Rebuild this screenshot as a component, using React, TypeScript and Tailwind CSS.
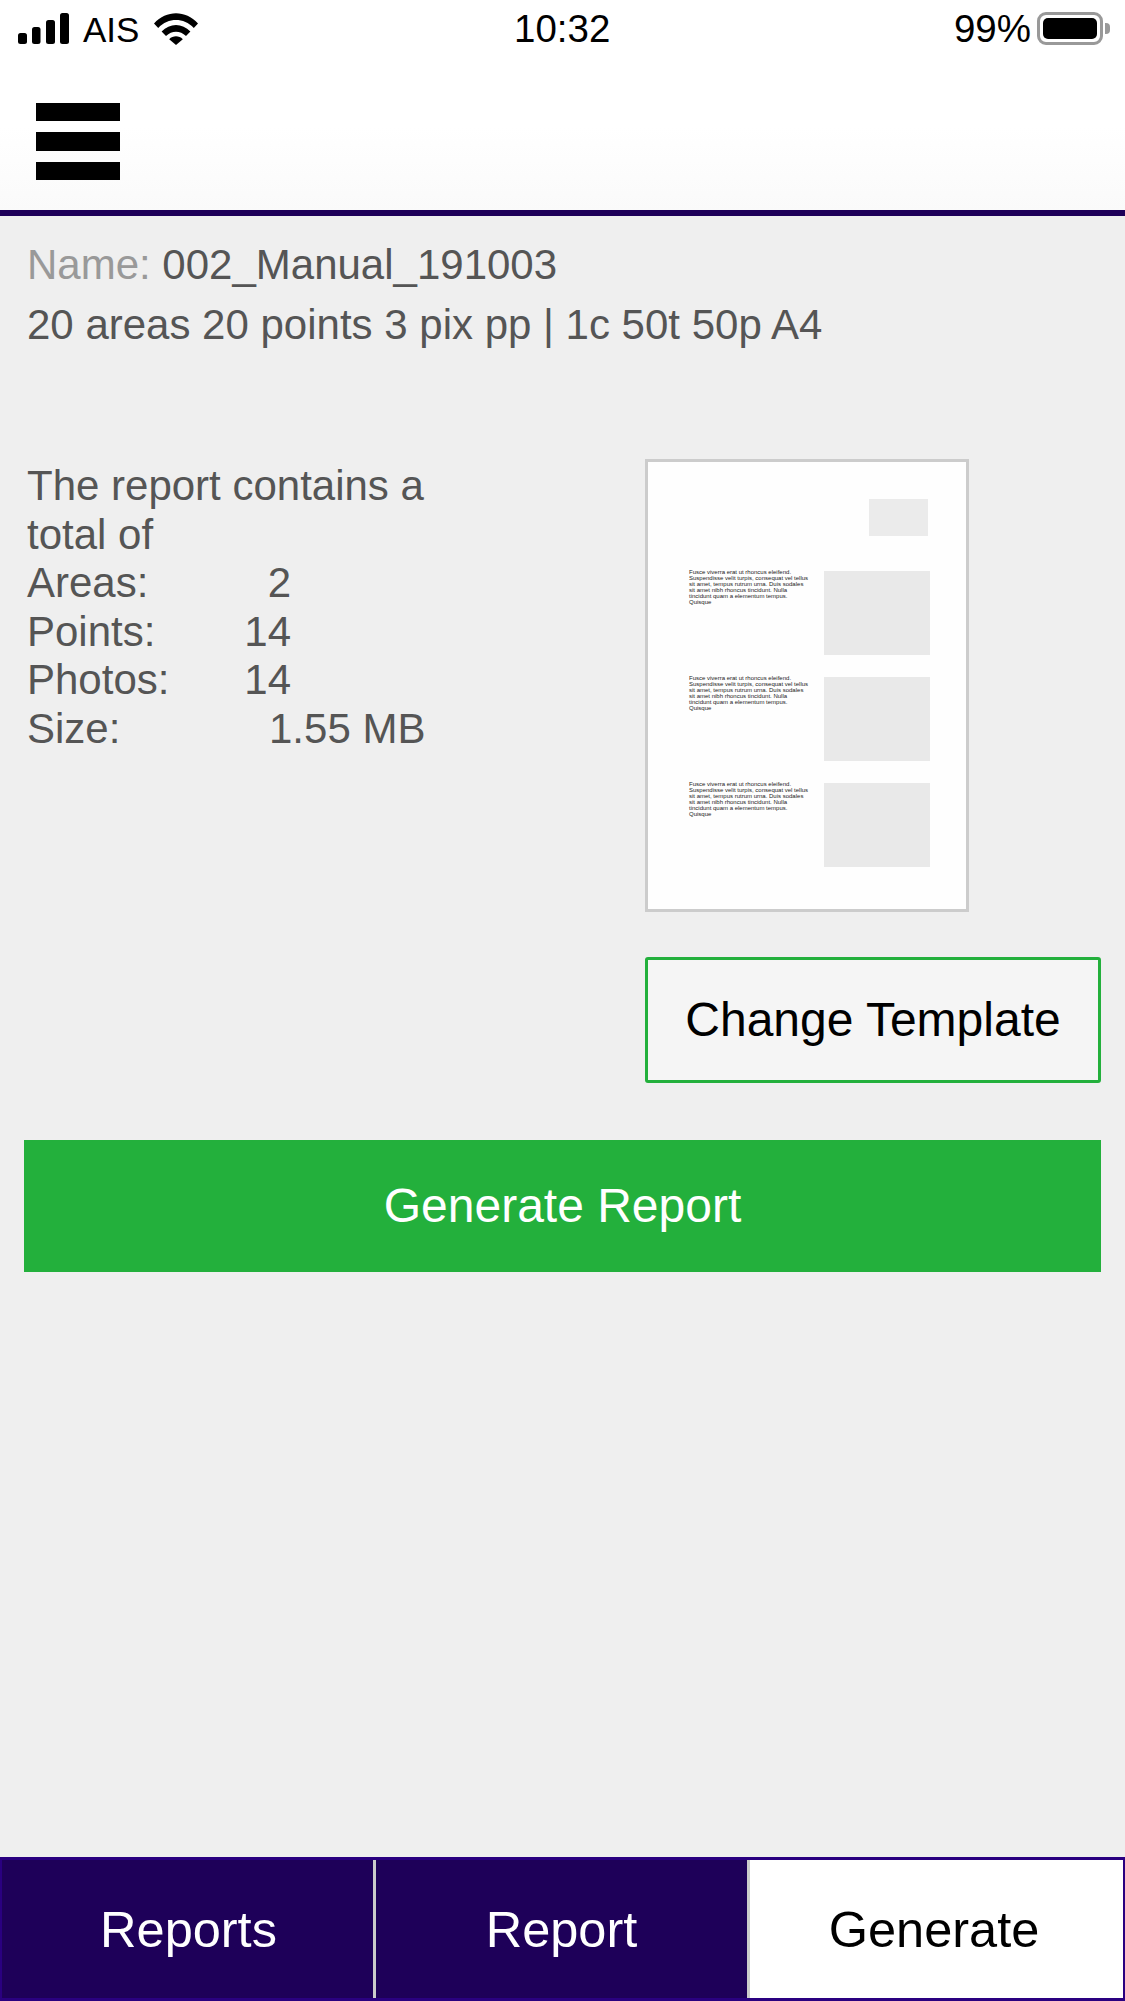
const font = "font-['Liberation_Sans',Arial,sans-serif]";

function SignalIcon() {
  return (
    <svg width="51" height="31" viewBox="0 0 51 31" className="shrink-0">
      <rect x="0" y="20" width="9" height="11" rx="2.5" fill="#000" />
      <rect x="14" y="14" width="8.5" height="17" rx="2.5" fill="#000" />
      <rect x="28" y="7" width="9" height="24" rx="2.5" fill="#000" />
      <rect x="42" y="0" width="9" height="31" rx="2.5" fill="#000" />
    </svg>
  );
}

function WifiIcon() {
  return (
    <svg width="44" height="32" viewBox="0 0 44 32" className="shrink-0">
      <path d="M0 10.5C12.5 -3.2 31.5 -3.2 44 10.5L39.8 15C29.6 4.4 14.4 4.4 4.2 15Z" fill="#000" />
      <path d="M7.6 18.5C15.8 9.8 28.2 9.8 36.4 18.5L32 23C26.2 17.2 17.8 17.2 12 23Z" fill="#000" />
      <path d="M15.2 26.2C19 22.4 25 22.4 28.8 26.2L22 32Z" fill="#000" />
    </svg>
  );
}

function BatteryIcon() {
  return (
    <div className="flex items-center shrink-0">
      <div className="w-[66px] h-[33px] rounded-[9px] border-[3px] border-[#999999] p-[3px]">
        <div className="w-full h-full rounded-[5px] bg-black" />
      </div>
      <div className="ml-[2px] w-[5px] h-[11px] rounded-r-[4px] bg-[#999999]" />
    </div>
  );
}

function StatusBar() {
  return (
    <div className="h-[60px] bg-white flex items-start justify-between pl-[18px] pr-[15px] pt-[12px] relative">
      <div className="flex items-start">
        <div className="pt-[1px]"><SignalIcon /></div>
        <span className="ml-[14px] text-[35px] leading-[36px] text-black">AIS</span>
        <div className="ml-[15px] pt-[1px]"><WifiIcon /></div>
      </div>
      <span className="absolute left-[514px] top-[10px] text-[38.5px] leading-[38px] text-black">10:32</span>
      <div className="flex items-start">
        <span className="mr-[6px] -mt-[2px] text-[38.5px] leading-[38px] text-black">99%</span>
        <BatteryIcon />
      </div>
    </div>
  );
}

function Header() {
  return (
    <div className="h-[156px] bg-gradient-to-b from-white from-[45%] to-[#fafafa] border-b-[6px] border-[#1e0059] pl-[36px] pt-[43px] box-border">
      <div className="w-[84px] flex flex-col gap-[11px]">
        <div className="h-[18px] bg-black" />
        <div className="h-[19px] bg-black" />
        <div className="h-[18px] bg-black" />
      </div>
    </div>
  );
}

const thumbLines = [
  "Fusce viverra erat ut rhoncus eleifend.",
  "Suspendisse velit turpis, consequat vel tellus",
  "sit amet, tempus rutrum urna. Duis sodales",
  "sit amet nibh rhoncus tincidunt. Nulla",
  "tincidunt quam a elementum tempus.",
  "Quisque",
];

function ThumbText() {
  return (
    <div className="w-[125px] -mt-[2px] text-[6px] leading-[6px] text-[#222222] whitespace-nowrap">
      {thumbLines.map((line) => (
        <div key={line}>{line}</div>
      ))}
    </div>
  );
}

function ThumbRow() {
  return (
    <div className="flex items-start justify-between">
      <ThumbText />
      <div className="w-[106px] h-[84px] bg-[#e9e9e9]" />
    </div>
  );
}

function TemplateThumb() {
  return (
    <div className="w-[324px] h-[453px] border-[3px] border-[#cccccc] bg-[#fefefe] box-border pt-[37px] pl-[41px] pr-[36px]">
      <div className="flex justify-end pr-[2px]">
        <div className="w-[59px] h-[37px] bg-[#ebebeb]" />
      </div>
      <div className="mt-[35px] flex flex-col gap-[22px]">
        <ThumbRow />
        <ThumbRow />
        <ThumbRow />
      </div>
    </div>
  );
}

const stats = [
  { label: "Areas:", value: "2" },
  { label: "Points:", value: "14" },
  { label: "Photos:", value: "14" },
];

function App() {
  return (
    <div className={`${font} w-[1125px] h-[2001px] bg-[#efefef] flex flex-col overflow-hidden`}>
      <StatusBar />
      <Header />

      <div className="pl-[27px] pt-[19px] text-[42px] leading-[60px] text-[#555555]">
        <div>
          <span className="text-[#999999]">Name:</span> 002_Manual_191003
        </div>
        <div>20 areas 20 points 3 pix pp | 1c 50t 50p A4</div>
      </div>

      <div className="mt-[104px] flex justify-between pl-[27px] pr-[24px]">
        <div className="w-[420px] pt-[3px] text-[42px] leading-[48.5px] text-[#555555]">
          <div>The report contains a total of</div>
          {stats.map((s) => (
            <div key={s.label} className="flex">
              <span className="w-[192px]">{s.label}</span>
              <span className="w-[72px] text-right">{s.value}</span>
            </div>
          ))}
          <div className="flex">
            <span className="w-[242px]">Size:</span>
            <span>1.55 MB</span>
          </div>
        </div>

        <div className="w-[456px] flex flex-col">
          <TemplateThumb />
          <button className="mt-[45px] w-full h-[126px] border-[3px] border-[#23b03c] rounded-[3px] bg-[#f5f5f5] text-[48px] text-black">
            Change Template
          </button>
        </div>
      </div>

      <div className="mt-[57px] pl-[24px] pr-[24px]">
        <button className="w-full h-[132px] bg-[#23b03c] text-[48px] text-white">Generate Report</button>
      </div>

      <div className="mt-auto h-[144px] bg-[#1e0059] border-[3px] border-x-[2px] border-[#2a0080] grid grid-cols-[374px_374px_1fr] text-[50.5px]">
        <div className="flex items-center justify-center pt-[2px] pl-[2px] text-white border-r-[3px] border-[#cccccc]">Reports</div>
        <div className="flex items-center justify-center pt-[2px] text-white border-r-[3px] border-[#cccccc]">Report</div>
        <div className="flex items-center justify-center pt-[2px] pr-[5px] bg-white text-black">Generate</div>
      </div>
    </div>
  );
}

export default App;
